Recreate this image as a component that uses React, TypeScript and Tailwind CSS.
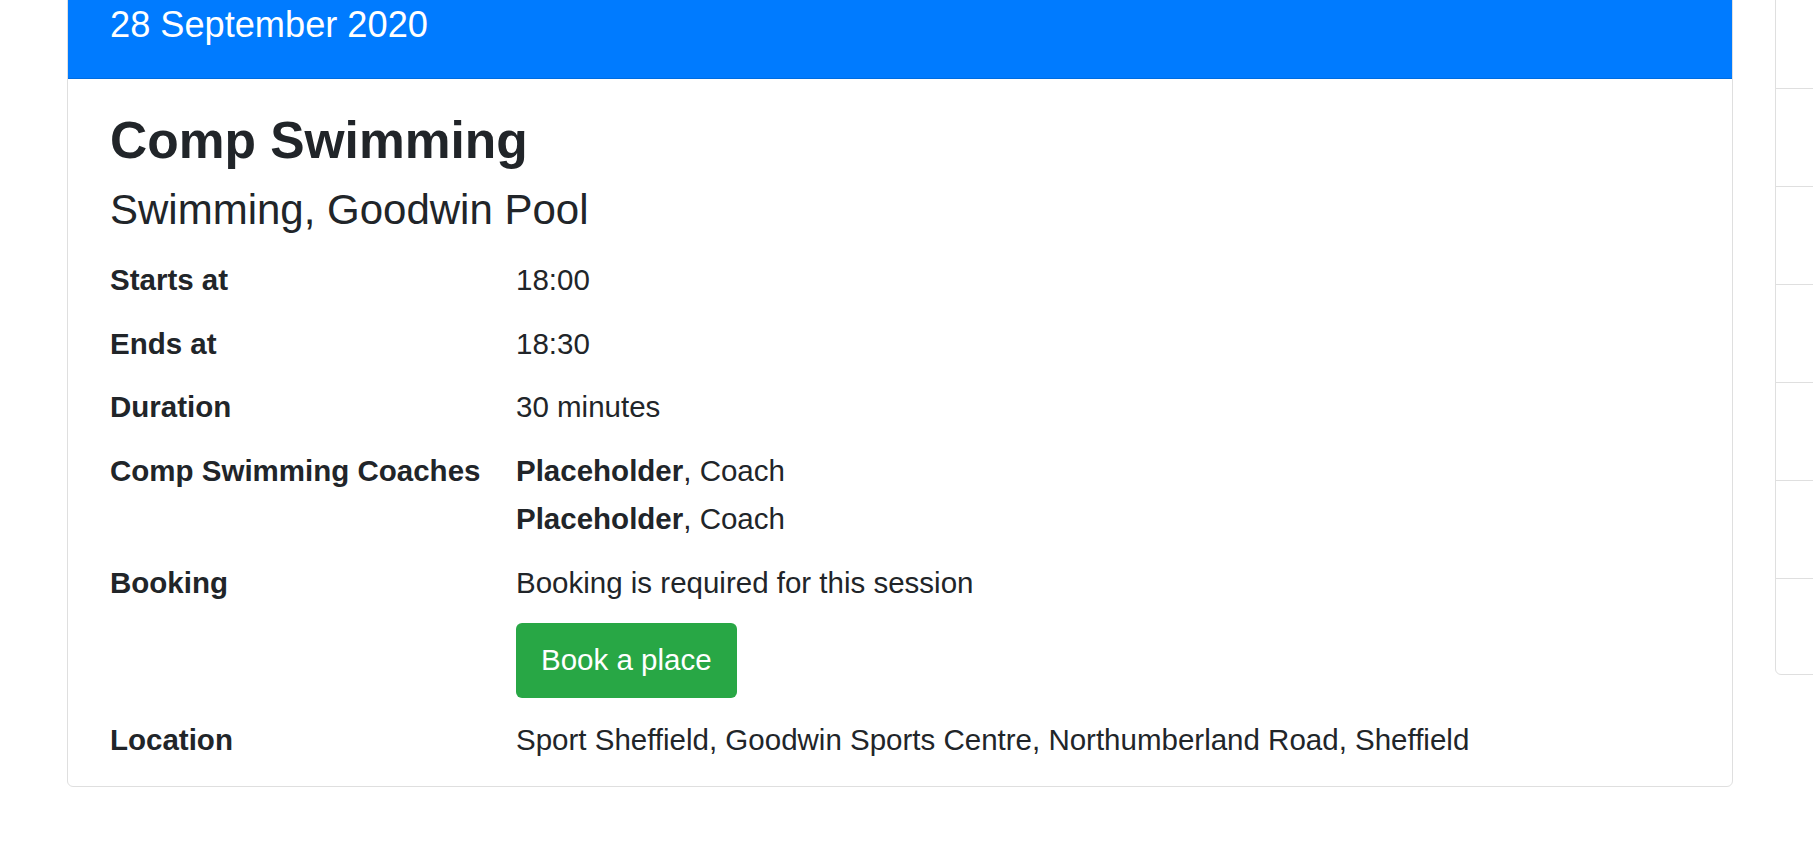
import React from "react";

function Row({ label, children, className = "" }: { label: string; children: React.ReactNode; className?: string }) {
  return (
    <>
      <div className={"font-bold " + className}>{label}</div>
      <div className={className}>{children}</div>
    </>
  );
}

export default function App() {
  return (
    <div className="w-[1813px] h-[842px] overflow-hidden bg-white text-[#212529] font-['Liberation_Sans',Arial,sans-serif]">
      <div className="flex items-start pl-[67px] gap-[42px]">
        <div className="w-[1666px] shrink-0 -mt-[29px] border border-[#dfdfdf] rounded-[6px] overflow-hidden bg-white">
          <div className="bg-[#007bff] px-[42px] pt-[31px] pb-[32px] border-b border-[#006cdf]">
            <div className="text-white text-[36.2px] leading-[43px]">28 September 2020</div>
          </div>
          <div className="px-[42px] pt-[30px] pb-[22px]">
            <div className="text-[51.5px] leading-[62px] font-bold">Comp Swimming</div>
            <div className="mt-[14px] text-[42px] leading-[49px]">Swimming, Goodwin Pool</div>
            <div className="mt-[22px] grid grid-cols-[406px_1fr] gap-y-[15.7px] text-[29.5px] leading-[48px]">
              <Row label="Starts at">18:00</Row>
              <Row label="Ends at">18:30</Row>
              <Row label="Duration">30 minutes</Row>
              <Row label="Comp Swimming Coaches">
                <div>
                  <span className="font-bold">Placeholder</span>, Coach
                </div>
                <div>
                  <span className="font-bold">Placeholder</span>, Coach
                </div>
              </Row>
              <Row label="Booking">
                <div>Booking is required for this session</div>
                <div className="mt-[15.8px] mb-[3px]">
                  <button className="h-[75px] px-[25px] flex items-center rounded-[6px] bg-[#28a745] text-white text-[29.5px] leading-[48px]">
                    Book a place
                  </button>
                </div>
              </Row>
              <Row label="Location">Sport Sheffield, Goodwin Sports Centre, Northumberland Road, Sheffield</Row>
            </div>
          </div>
        </div>
        <div className="w-[300px] shrink-0 -mt-[10px] border border-[#dfdfdf] rounded-[6px] bg-white">
          <div className="h-[98px] border-b border-[#dfdfdf]"></div>
          <div className="h-[98px] border-b border-[#dfdfdf]"></div>
          <div className="h-[98px] border-b border-[#dfdfdf]"></div>
          <div className="h-[98px] border-b border-[#dfdfdf]"></div>
          <div className="h-[98px] border-b border-[#dfdfdf]"></div>
          <div className="h-[98px] border-b border-[#dfdfdf]"></div>
          <div className="h-[95px]"></div>
        </div>
      </div>
    </div>
  );
}
